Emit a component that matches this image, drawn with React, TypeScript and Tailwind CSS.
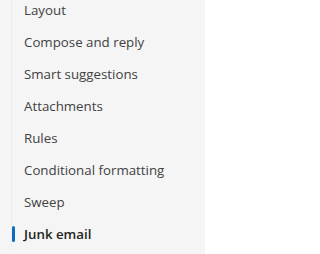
import React from "react";

const items = [
  "Layout",
  "Compose and reply",
  "Smart suggestions",
  "Attachments",
  "Rules",
  "Conditional formatting",
  "Sweep",
  "Junk email",
];

export default function App() {
  return (
    <div className="w-[205px] h-[254px] overflow-hidden bg-[#f5f5f5]" style={{ fontFamily: '"Open Sans", "Noto Sans", sans-serif' }}>
      <div className="ml-[11px] h-full border-l border-dotted border-[#e6e6e6]">
        <div className="-mt-[5px] flex flex-col">
          {items.map((t) => {
            const active = t === "Junk email";
            return (
              <div key={t} className="relative flex h-[32px] items-center pl-[12px]">
                {active && <span className="absolute left-[0px] top-[7px] h-[16px] w-[3px] rounded-full bg-[#0f6cbd]" />}
                <span className={active ? "text-[13.3px] font-semibold text-[#242424]" : "text-[13.3px] text-[#424242]"}>{t}</span>
              </div>
            );
          })}
        </div>
      </div>
    </div>
  );
}
